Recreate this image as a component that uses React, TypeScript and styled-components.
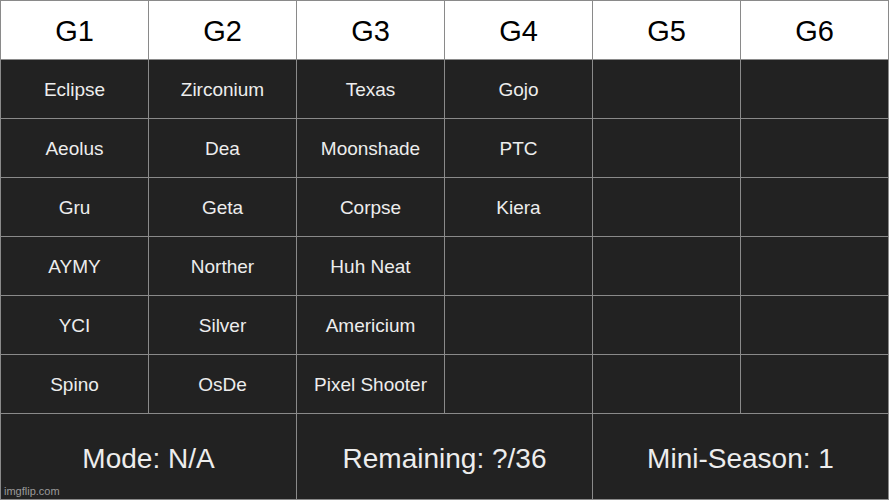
import React from "react";
import styled, { createGlobalStyle } from "styled-components";

const Global = createGlobalStyle`
  html, body { margin: 0; padding: 0; background: #ffffff; }
  body { font-family: "Liberation Sans", Arial, sans-serif; }
`;

const Board = styled.div`
  position: relative;
  width: 889px;
  height: 500px;
  box-sizing: border-box;
  padding: 1px;
  background: #8a8a8a;
  display: grid;
  grid-template-columns: repeat(6, 147px);
  grid-template-rows: repeat(7, 58px) 85px;
  gap: 1px;
`;

const HeadCell = styled.div`
  background: #ffffff;
  color: #000000;
  font-size: 29px;
  padding-top: 3px;
  display: flex;
  align-items: center;
  justify-content: center;
`;

const Cell = styled.div`
  background: #222222;
  color: #ededed;
  font-size: 19px;
  padding-top: 2px;
  display: flex;
  align-items: center;
  justify-content: center;
`;

const FootCell = styled.div`
  grid-column: span 2;
  background: #222222;
  color: #ededed;
  font-size: 28px;
  padding-top: 4px;
  display: flex;
  align-items: center;
  justify-content: center;
`;

const Watermark = styled.div`
  position: absolute;
  left: 4px;
  bottom: 3px;
  font-size: 11px;
  color: #9a9a9a;
`;

const headers = ["G1", "G2", "G3", "G4", "G5", "G6"];
const rows: string[][] = [
  ["Eclipse", "Zirconium", "Texas", "Gojo", "", ""],
  ["Aeolus", "Dea", "Moonshade", "PTC", "", ""],
  ["Gru", "Geta", "Corpse", "Kiera", "", ""],
  ["AYMY", "Norther", "Huh Neat", "", "", ""],
  ["YCI", "Silver", "Americium", "", "", ""],
  ["Spino", "OsDe", "Pixel Shooter", "", "", ""],
];
const footer = ["Mode: N/A", "Remaining: ?/36", "Mini-Season: 1"];

export default function App() {
  return (
    <>
      <Global />
      <Board>
        {headers.map((h) => (
          <HeadCell key={h}>{h}</HeadCell>
        ))}
        {rows.map((r, i) =>
          r.map((c, j) => <Cell key={`${i}-${j}`}>{c}</Cell>)
        )}
        {footer.map((f) => (
          <FootCell key={f}>{f}</FootCell>
        ))}
        <Watermark>imgflip.com</Watermark>
      </Board>
    </>
  );
}
